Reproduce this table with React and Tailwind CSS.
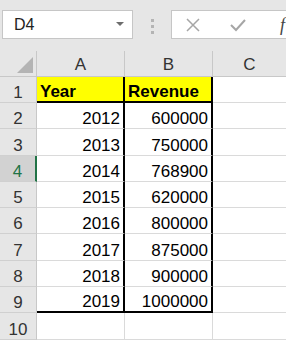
import React from "react";

const rows = [
  ["2012", "600000"],
  ["2013", "750000"],
  ["2014", "768900"],
  ["2015", "620000"],
  ["2016", "800000"],
  ["2017", "875000"],
  ["2018", "900000"],
  ["2019", "1000000"],
];

const font = { fontFamily: '"Liberation Sans", Arial, sans-serif' };

function RowHead({ n, selected }) {
  return (
    <div
      className={
        "w-[37px] shrink-0 flex items-end pb-[1px] justify-center border-b border-[#d0d0d0] " +
        (selected
          ? "bg-[#d2d2d2] text-[#217346] border-r-2 border-r-[#217346]"
          : "bg-[#e6e6e6] text-[#333] border-r border-r-[#c8c8c8]")
      }
    >
      {n}
    </div>
  );
}

export default function App() {
  return (
    <div className="w-[286px] h-[342px] overflow-hidden bg-white text-[17px] leading-none" style={font}>
      {/* toolbar */}
      <div className="h-[51px] bg-[#e6e6e6] flex items-start pt-[10px] pl-[2px]">
        <div className="w-[131px] h-[29px] bg-white border border-[#c6c6c6] flex items-center pl-[11px] pr-[8px] justify-between">
          <span className="text-[16px] text-[#222]">D4</span>
          <svg width="8" height="5" viewBox="0 0 8 5">
            <path d="M0 0 L8 0 L4 4 Z" fill="#6d6d6d" />
          </svg>
        </div>
        <div className="w-[38px] flex flex-col items-center gap-[3px] pt-[9px]">
          <div className="w-[3px] h-[3px] bg-[#b4b4b4]" />
          <div className="w-[3px] h-[3px] bg-[#b4b4b4]" />
          <div className="w-[3px] h-[3px] bg-[#b4b4b4]" />
        </div>
        <div className="flex-1 h-[29px] bg-white border border-[#c6c6c6] border-r-0 flex items-center pl-[14px]">
          <svg width="14" height="14" viewBox="0 0 14 14">
            <path d="M1 1 L13 13 M13 1 L1 13" stroke="#a6a6a6" strokeWidth="1.5" />
          </svg>
          <svg width="16" height="14" viewBox="0 0 16 14" className="ml-[30px]">
            <path d="M1 7 L6 12 L15 2" stroke="#a6a6a6" strokeWidth="2" fill="none" />
          </svg>
          <span className="ml-[34px] text-[18px] italic text-[#444]" style={{ fontFamily: '"Liberation Serif", serif' }}>f</span>
        </div>
      </div>

      {/* column headers */}
      <div className="flex h-[26px] bg-[#e6e6e6] border-b border-[#c8c8c8] text-[#333]">
        <div className="w-[37px] shrink-0 border-r border-[#c8c8c8] relative">
          <svg width="16" height="16" viewBox="0 0 16 16" className="absolute right-[3px] bottom-[3px]">
            <path d="M16 0 L16 16 L0 16 Z" fill="#b4b4b4" />
          </svg>
        </div>
        <div className="w-[88px] shrink-0 border-r border-[#c8c8c8] flex items-end pb-[3px] justify-center">A</div>
        <div className="w-[88px] shrink-0 border-r border-[#c8c8c8] flex items-end pb-[3px] justify-center">B</div>
        <div className="w-[73px] shrink-0 flex items-end pb-[3px] justify-center">C</div>
      </div>

      {/* row 1 */}
      <div className="flex h-[26px]">
        <RowHead n={1} />
        <div className="w-[88px] shrink-0 bg-[#ffff00] font-bold flex items-end pb-[1px] pl-[3px] border-r-2 border-b-2 border-black">Year</div>
        <div className="w-[88px] shrink-0 bg-[#ffff00] font-bold flex items-end pb-[1px] pl-[3px] border-r-2 border-b-2 border-black">Revenue</div>
        <div className="flex-1 border-b border-[#dadada]" />
      </div>

      {rows.map(([y, r], i) => {
        const last = i === rows.length - 1;
        const bb = last ? "border-b-2 border-b-black" : "border-b border-b-[#dadada]";
        return (
          <div key={y} className="flex h-[26.3px]">
            <RowHead n={i + 2} selected={i === 2} />
            <div className={"w-[88px] shrink-0 flex items-end pb-[1px] justify-end pr-[3px] border-r-2 border-r-black " + bb}>{y}</div>
            <div className={"w-[88px] shrink-0 flex items-end pb-[1px] justify-end pr-[3px] border-r-2 border-r-black " + bb}>{r}</div>
            <div className="flex-1 border-b border-[#dadada]" />
          </div>
        );
      })}

      {/* row 10 */}
      <div className="flex h-[27px]">
        <RowHead n={10} />
        <div className="w-[88px] shrink-0 border-r border-b border-[#dadada]" />
        <div className="w-[88px] shrink-0 border-r border-b border-[#dadada]" />
        <div className="flex-1 border-b border-[#dadada]" />
      </div>
    </div>
  );
}
